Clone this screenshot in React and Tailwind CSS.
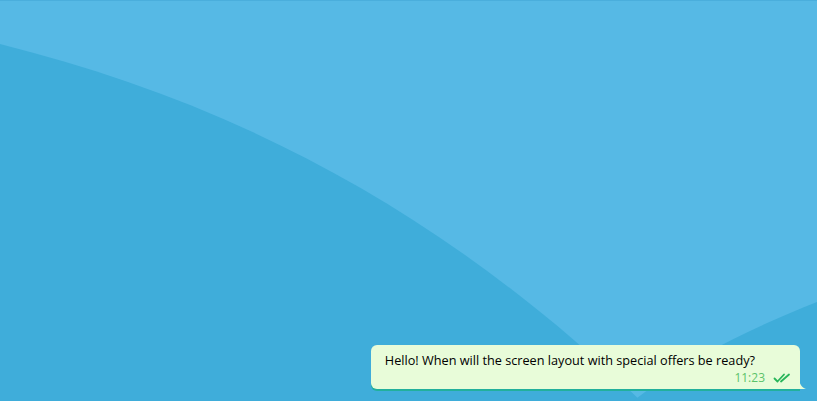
import React from 'react';

function Backdrop() {
  return (
    <svg className="absolute inset-0 w-full h-full" viewBox="0 0 817 401" preserveAspectRatio="none">
      <path d="M0,44 C215,98 430,197 645,405 L0,405 Z" fill="#3fadda" />
      <path d="M817,302 C760,325 690,355 628,405 L817,405 Z" fill="#3fadda" />
      <rect x="0" y="0" width="817" height="1" fill="#4aaedc" />
    </svg>
  );
}

function DoubleCheck() {
  return (
    <svg width="18" height="10" viewBox="0 0 18 10" fill="none" stroke="#27b55a" strokeWidth="1.8" strokeLinecap="round" strokeLinejoin="round">
      <path d="M1.5 5.5 L4.5 8.5 L11 1.5" />
      <path d="M8 8.5 L16 1.5" />
    </svg>
  );
}

export default function App() {
  return (
    <div className="relative w-[817px] h-[401px] overflow-hidden bg-[#56b9e5] flex flex-col items-end justify-end pr-[17px] pb-[12px]">
      <Backdrop />
      {/* Message bubble */}
      <div className="relative">
        <div className="bg-[#e8fcd9] rounded-[6px] rounded-br-none shadow-[0_2px_0_#22b09c] pl-[14px] pr-[9px] pt-[6px] pb-[3px] font-['Open_Sans',sans-serif]">
          <p className="text-[12.7px] leading-[18px] text-black pr-[36px]">
            Hello! When will the screen layout with special offers be ready?
          </p>
          <div className="flex items-center justify-end gap-[8px] mt-[1px]">
            <span className="text-[12px] leading-[16px] text-[#5cc36b]">11:23</span>
            <DoubleCheck />
          </div>
        </div>
        <svg className="absolute right-[-6px] bottom-0" width="7" height="12" viewBox="0 0 7 12">
          <path d="M0,0 C0,6 2,10 7,12 L0,12 Z" fill="#e8fcd9" />
        </svg>
      </div>
    </div>
  );
}
